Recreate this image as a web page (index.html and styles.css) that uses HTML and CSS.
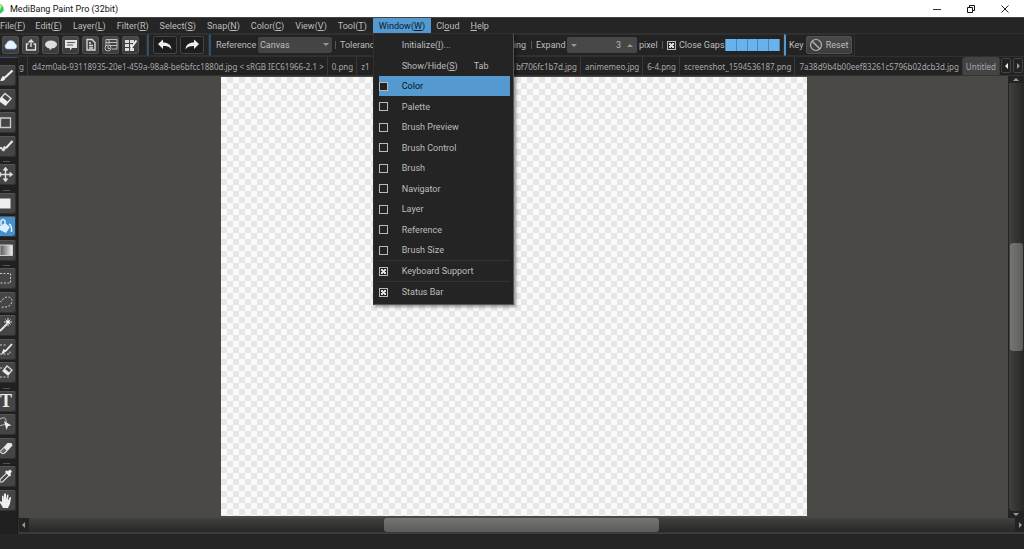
FILE: index.html
```html
<!DOCTYPE html>
<html lang="en">
<head>
<meta charset="utf-8">
<title>MediBang Paint Pro (32bit)</title>
<link rel="stylesheet" href="styles.css">
</head>
<body>
<div class="app">
  <header class="titlebar">
    <svg class="logo" width="5" height="12" viewBox="0 0 5 12"><path d="M0 1C3 2 4 5 3.5 8L0 11Z" fill="#35c76b"/><path d="M0 1l2 2-2 4z" fill="#c6ee70"/></svg>
    <h1 class="title">MediBang Paint Pro (32bit)</h1>
    <div class="window-buttons">
      <button aria-label="Minimize"><svg width="12" height="12" viewBox="0 0 12 12"><path d="M2 6.5h8" stroke="#333" fill="none"/></svg></button>
      <button aria-label="Restore"><svg width="12" height="12" viewBox="0 0 12 12"><path d="M2.5 4.5h5v5h-5zM4.5 4.500v-2h5v5h-2" stroke="#111" fill="none"/></svg></button>
      <button aria-label="Close"><svg width="12" height="12" viewBox="0 0 12 12"><path d="M2.500 2.500l7 7M9.500 2.500l-7 7" stroke="#222" fill="none"/></svg></button>
    </div>
  </header>

  <nav class="menubar" aria-label="Main menu">
    <button>File(<u>F</u>)</button>
    <button>Edit(<u>E</u>)</button>
    <button>Layer(<u>L</u>)</button>
    <button>Filter(<u>R</u>)</button>
    <button>Select(<u>S</u>)</button>
    <button>Snap(<u>N</u>)</button>
    <button>Color(<u>C</u>)</button>
    <button>View(<u>V</u>)</button>
    <button>Tool(<u>T</u>)</button>
    <div class="menu-holder">
      <button class="open" aria-expanded="true">Window(<u>W</u>)</button>
      <div class="dropdown">
        <button class="row">Initialize(<u>I</u>)...</button>
        <button class="row">Show/Hide(<u>S</u>)<span class="shortcut">Tab</span></button>
        <label class="row active"><input type="checkbox">Color</label>
        <label class="row"><input type="checkbox">Palette</label>
        <label class="row"><input type="checkbox">Brush Preview</label>
        <label class="row"><input type="checkbox">Brush Control</label>
        <label class="row"><input type="checkbox">Brush</label>
        <label class="row"><input type="checkbox">Navigator</label>
        <label class="row"><input type="checkbox">Layer</label>
        <label class="row"><input type="checkbox">Reference</label>
        <label class="row"><input type="checkbox">Brush Size</label>
        <label class="row ruled"><input type="checkbox" checked>Keyboard Support</label>
        <label class="row ruled"><input type="checkbox" checked>Status Bar</label>
      </div>
    </div>
    <button>Cl<u>o</u>ud</button>
    <button><u>H</u>elp</button>
  </nav>

  <div class="toolbar">
    <div class="group icons">
      <button class="icon-button" aria-label="Cloud"><svg width="16" height="18" viewBox="0 0 16 18"><path d="M4 13a3 3 0 0 1-.5-5.500 4.500 4.500 0 0 1 8.500 0A3 3 0 0 1 12 13z" fill="#e8f3ff" stroke="#78aee0" stroke-width=".6"/></svg></button>
      <button class="icon-button" aria-label="Export"><svg width="16" height="18" viewBox="0 0 16 18"><path d="M5.500 8H3.500v6h9V8h-2M8 11V4M5.500 6.500L8 4l2.500 2.500" fill="none" stroke="#ddd" stroke-width="1.400"/></svg></button>
      <button class="icon-button" aria-label="Balloon"><svg width="16" height="18" viewBox="0 0 16 18"><ellipse cx="8" cy="8.500" rx="6" ry="4" fill="#ddd"/><path d="M6 11l1 3.500 2-3z" fill="#ddd"/></svg></button>
      <button class="icon-button" aria-label="Comment"><svg width="16" height="18" viewBox="0 0 16 18"><path d="M2 4h12v8H9l-2 2.500V12H2z" fill="#e4e4e4"/><path d="M4 6.500h8M4 9h6" stroke="#555"/></svg></button>
      <button class="icon-button" aria-label="Document"><svg width="16" height="18" viewBox="0 0 16 18"><path d="M4 3.500h5l3 3V14H4zM6 7h2M6 9.500h4M6 12h4" fill="none" stroke="#ddd" stroke-width="1.300"/></svg></button>
      <button class="icon-button" aria-label="Frame settings"><svg width="16" height="18" viewBox="0 0 16 18"><path d="M3 10V3.500h11V13H9M3 6.500h11M6 3.500v5M6 9.500h8" fill="none" stroke="#bbb"/><circle cx="5" cy="12" r="3" fill="none" stroke="#bbb"/><path d="M5 10v2.500h2" fill="none" stroke="#bbb"/></svg></button>
      <button class="icon-button" aria-label="Edit grid"><svg width="16" height="18" viewBox="0 0 16 18"><path d="M2 4h4v3H2zM7 4h4v3H7zM2 8h4v3H2zM7 8h2v3H7zM2 12h4v3H2zM7 12h4v3H7z" fill="#ddd"/><path d="M8 12l5.500-7.500" stroke="#eee" stroke-width="2"/></svg></button>
    </div>
    <div class="group history">
      <button class="history-button" aria-label="Undo"><svg width="16" height="14" viewBox="0 0 16 14"><path d="M1 6l5-4.500V4.500c5 0 8 2 8.500 7C12.500 8.500 10 8 6 8v3z" fill="#eee"/></svg></button>
      <button class="history-button" aria-label="Redo"><svg width="16" height="14" viewBox="0 0 16 14"><path d="M15 6l-5-4.500V4.500c-5 0-8 2-8.500 7C3.500 8.500 6 8 10 8v3z" fill="#eee"/></svg></button>
    </div>
    <div class="group options">
      <label for="ref">Reference</label>
      <span class="select-wrap"><select id="ref"><option>Canvas</option></select></span>
      <i class="bar"></i>
      <label class="tolerance" for="tol">Tolerance</label>
      <input id="tol" class="tol-input" type="text" value="0">
      <label class="smooth">Anti-aliasing</label>
      <i class="bar"></i>
      <label class="expand" for="exp">Expand</label>
      <span class="spinner"><b class="tri down"></b><input id="exp" type="text" value="3"><b class="tri up"></b></span>
      <span class="unit">pixel</span>
      <i class="bar"></i>
      <label class="gaps"><input type="checkbox" checked>Close Gaps</label>
      <div class="meter"><i></i><i></i><i></i><i></i><i></i></div>
    </div>
    <div class="group keys">
      <span>Key</span>
      <button class="reset"><svg width="14" height="14" viewBox="0 0 14 14"><circle cx="7" cy="7" r="5.500" fill="none" stroke="#b8b8b8" stroke-width="1.200"/><path d="M3 3l8 8" stroke="#b8b8b8" stroke-width="1.200"/></svg>Reset</button>
    </div>
  </div>

  <div class="body">
    <aside class="tools">
      <button aria-label="Brush"><svg viewBox="0 0 16 21"><path d="M12.500 5.500L5 12.500" stroke="#eee" stroke-width="2.200"/><path d="M5.500 12.500c0 3-3 4-5.500 3 1.500-1 1.500-4 3.500-4.500z" fill="#eee"/></svg></button>
      <button aria-label="Eraser"><svg viewBox="0 0 16 21"><path d="M0 10l5-5.500 6 5-5.500 6.500L0 12" fill="none" stroke="#ddd" stroke-width="1.500"/><path d="M0 10l2-2 6 5-2.500 3L0 12z" fill="#eee"/></svg></button>
      <button aria-label="Shape"><svg viewBox="0 0 16 21"><path d="M0 6h10.500v9.500H0M.5 6v9.500" fill="none" stroke="#ccc" stroke-width="1.300"/></svg></button>
      <button aria-label="Dot pen"><svg viewBox="0 0 16 21"><path d="M12.500 5L6 12" stroke="#eee" stroke-width="2"/><path d="M7 11l-3 4.500L1 14l3-4zM0 11h2v2H0z" fill="#ddd"/></svg></button>
      <hr>
      <button aria-label="Move"><svg viewBox="0 0 16 21"><path d="M5.500 5v11M0 10.500h11M3.500 6.500l2-2.500 2 2.500M3.500 14.500l2 2.500 2-2.500M9.500 8.500l2.500 2-2.500 2M1 8.500l-1 1M1 12.500l-1-1" fill="none" stroke="#ddd" stroke-width="1.500"/></svg></button>
      <hr>
      <button aria-label="Fill rectangle"><svg viewBox="0 0 16 21"><path d="M0 5.500h10.500v10H0z" fill="#eee"/></svg></button>
      <button class="selected" aria-label="Bucket"><svg viewBox="0 0 16 21"><path d="M0 10l5-3 5 4-4 6-6-3z" fill="#d9eefe"/><path d="M1 9V5q2-3 4 0v4M9 8q3 1 2.500 8" fill="none" stroke="#e0f0ff" stroke-width="1.500"/></svg></button>
      <button aria-label="Gradient"><svg viewBox="0 0 16 21"><defs><linearGradient id="g"><stop offset="0" stop-color="#555"/><stop offset="1" stop-color="#f2f2f2"/></linearGradient></defs><path d="M0 5h12.500v10.500H0z" fill="url(#g)" stroke="#ccc"/></svg></button>
      <hr>
      <button aria-label="Select"><svg viewBox="0 0 16 21"><path d="M0 5.500h10.500v9.500H0" fill="none" stroke="#ccc" stroke-dasharray="2 1.500"/></svg></button>
      <button aria-label="Lasso"><svg viewBox="0 0 16 21"><path d="M0 9c1 2 2-1 4-3 4-2 8-1 8 3s-4 7-12 6" fill="none" stroke="#ccc" stroke-dasharray="2 1.500"/></svg></button>
      <button aria-label="Magic wand"><svg viewBox="0 0 16 21"><path d="M0 16l7-7" stroke="#ddd" stroke-width="2"/><path d="M8 3v8M4 7h8M5.500 4.500l5 5M10.500 4.500l-5 5" stroke="#ddd"/><circle cx="8" cy="7" r="1.500" fill="#fff"/></svg></button>
      <button aria-label="Select pen"><svg viewBox="0 0 16 21"><path d="M0 6h6M0 15h10v-4" fill="none" stroke="#ccc" stroke-dasharray="2 1.500"/><path d="M12 5l-6 6.500-3 2 1-3" stroke="#eee" stroke-width="1.800" fill="none"/></svg></button>
      <button aria-label="Select eraser"><svg viewBox="0 0 16 21"><path d="M0 6h4M0 15h10" stroke="#ccc" stroke-dasharray="2 1.500"/><path d="M3 9l4-5 5 4-4 5z" fill="none" stroke="#ddd" stroke-width="1.300"/><path d="M3 9l2-2 5 4-2 2z" fill="#eee"/></svg></button>
      <hr>
      <button class="type" aria-label="Text">T</button>
      <button aria-label="Operation"><svg viewBox="0 0 16 21"><path d="M0 5q5-3 6 1t-3 5-3 0" fill="none" stroke="#bbb"/><path d="M4 7l7.500 4.500-3.500.500-1.500 4z" fill="#eee"/></svg></button>
      <button aria-label="Divide"><svg viewBox="0 0 16 21"><path d="M0 13l7.500-8 4 0 1 2.500L5 15.500l-4 0z" fill="#e8e8e8"/><path d="M0 13.500l4-4 3 3-4 3.500z" fill="#666" stroke="#ddd"/></svg></button>
      <hr>
      <button aria-label="Eyedropper"><svg viewBox="0 0 16 21"><path d="M0 13.500l7-7 2.500 2.500-7 7H0z" fill="none" stroke="#ddd" stroke-width="1.200"/><path d="M6 4.500l2 .500 2-1.500 2 2-1.500 2 .500 2-1.500 1L5 6z" fill="#eee"/></svg></button>
      <button aria-label="Hand"><svg viewBox="0 0 16 21"><path d="M3 18c-1-2-2-4-3-5v-2l2 1V6q1-1 1.500 0l.500 4V4q1-1.500 2 0v6l1-5q1-1 1.500 0L8 10.500l2-3.500q1.500-.500 1 1-.500 6-3 10z" fill="#eee"/></svg></button>
    </aside>

    <main class="work">
      <div class="tabs">
        <span class="tab clipped">g</span>
        <span class="tab">d4zm0ab-93118935-20e1-459a-98a8-be6bfcc1880d.jpg &lt; sRGB IEC61966-2.1 &gt;</span>
        <span class="tab">0.png</span>
        <span class="tab long"><span>z1</span><span>931bf706fc1b7d.jpg</span></span>
        <span class="tab">animemeo.jpg</span>
        <span class="tab">6-4.png</span>
        <span class="tab">screenshot_1594536187.png</span>
        <span class="tab">7a38d9b4b00eef83261c5796b02dcb3d.jpg</span>
        <span class="tab current">Untitled</span>
        <button class="tab-arrow" aria-label="Previous tabs"><b class="tri left bright"></b></button>
        <button class="tab-arrow" aria-label="Next tabs"><b class="tri right"></b></button>
      </div>
      <div class="view">
        <div class="stage"><div class="paper"></div></div>
        <div class="vscroll"><b class="tri up"></b><div class="vtrack"><div class="thumb"></div></div><b class="tri down"></b></div>
      </div>
      <div class="hscroll"><b class="tri left"></b><div class="htrack"><div class="thumb"></div></div><b class="tri right"></b></div>
    </main>
  </div>
  <footer class="status"></footer>
</div>
</body>
</html>
```
FILE: styles.css
```css
* { box-sizing: border-box; }
body { margin: 0; background: #252525; color: #bdbdbd; font: 9px/12px Roboto, "Noto Sans", sans-serif; overflow: hidden; }
button, input, select { font: inherit; color: inherit; border: 0; padding: 0; margin: 0; background: none; }
svg { display: block; flex: none; }
.app { display: flex; flex-direction: column; height: 100vh; }

.titlebar { display: flex; align-items: center; height: 17px; background: #fff; color: #111; flex: none; }
.title { font-size: 9px; font-weight: 400; margin: 0 auto 0 5px; }
.window-buttons { display: flex; gap: 22px; padding-right: 13px; }

.menubar { display: flex; align-items: stretch; height: 17px; flex: none; border-top: 1px solid #444; border-bottom: 1px solid #303030; background: #252525; }
.menubar > button { padding: 0 6px 0 5px; white-space: nowrap; }
.menubar > button:first-child { padding: 0 5px 0 0; }
.menu-holder { position: relative; display: flex; }
.open { padding: 0 6px; background: #549ad0; color: #0b1c2b; }
.dropdown { position: absolute; z-index: 5; top: 100%; left: 0; width: 141px; padding: 1px 3px 2px 5px; background: #242424; border: 1px solid #303030; border-right-color: #555; border-bottom-color: #555; box-shadow: 2px 2px 3px rgba(0, 0, 0, .4); }
.row { display: flex; align-items: center; width: 100%; height: 20px; text-align: left; padding-left: 23px; white-space: nowrap; }
.row:nth-child(even) { height: 21px; }
label.row { padding-left: 0; }
.row input { margin: 0 14px 0 0; }
.row.active { background: #549ad0; color: #07131e; }
.row.ruled { height: 21px; border-top: 1px solid #333; }
.shortcut { margin-left: 16px; }
input[type="checkbox"] { appearance: none; flex: none; width: 9px; height: 9px; border: 1px solid #bbb; background: #242424; }
input[type="checkbox"]:checked { background: linear-gradient(45deg, transparent 38%, #ddd 38% 62%, transparent 62%) center / 5px 5px no-repeat, linear-gradient(-45deg, transparent 38%, #ddd 38% 62%, transparent 62%) center / 5px 5px no-repeat, #242424; }

.toolbar { display: flex; height: 23px; flex: none; background: #232323; border-bottom: 1px solid #303030; }
.group { display: flex; align-items: center; padding: 0 6px; border: 1px solid #303030; border-left: 0; }
.group + .group { border-left: 2px solid #32506a; }
.icons { gap: 3px; padding: 0 7px 0 2px; }
.icon-button, .reset { display: flex; align-items: center; justify-content: center; width: 17px; height: 18px; border: 1px solid #505050; border-radius: 2px; background: linear-gradient(#494949, #3b3b3b); }
.history { gap: 3px; padding: 0 4px 0 4px; }
.history-button { display: flex; align-items: center; justify-content: center; width: 24px; height: 18px; border: 1px solid #444; border-radius: 2px; background: #1d1d1d; }
.options { padding: 0 3px 0 5px; }
.options label, .unit { white-space: nowrap; flex: none; }
.options > label:first-child { width: 42px; }
.select-wrap { display: flex; position: relative; width: 74px; }
.select-wrap select { width: 100%; height: 16px; padding-left: 2px; appearance: none; background: #444; border-radius: 2px; }
.select-wrap::after { content: ""; position: absolute; right: 3px; top: 6px; border: 3px solid transparent; border-top-color: #999; border-bottom: 0; }
.bar { width: 1px; height: 8px; background: #5a5a5a; margin: 0 4px 0 3px; flex: none; }
.tol-input { width: 70px; height: 16px; margin: 0 8px; background: #444; }
.options .smooth { width: 63px; text-align: right; margin-right: 2px; }
.options .expand { width: 31px; }
.options .tolerance { width: 37px; }
.spinner { display: flex; align-items: center; width: 70px; height: 16px; padding: 0 4px; background: #474747; border-radius: 2px; }
.spinner input { flex: 1; min-width: 0; text-align: right; margin-right: 6px; }
.unit { width: 20px; margin-left: 2px; }
.gaps { display: flex; align-items: center; gap: 3px; width: 58px; }
.meter { display: flex; gap: 1px; width: 55px; height: 12px; padding: 0 1px; background: #4c87b5; }
.meter i { flex: 1; background: #68b2ee; }
.group.keys { border-left-color: #549ad0; padding: 0 2px 0 3px; gap: 2px; }
.reset { width: 46px; gap: 3px; }

.tri { width: 0; height: 0; flex: none; border: 3px solid transparent; }
.tri.up { border-bottom-color: #999; border-top: 0; }
.tri.down { border-top-color: #999; border-bottom: 0; }
.tri.left { border-right-color: #999; border-left: 0; }
.tri.right { border-left-color: #999; border-right: 0; }
.tri.left.bright { border-right-color: #eee; }

.body { display: flex; flex: 1; min-height: 0; }
.tools { display: flex; flex-direction: column; width: 18px; flex: none; padding-top: 7px; background: #202020; border-top: 1px solid #32506a; border-right: 1px solid #191919; }
.tools button { display: block; flex: none; width: 16px; height: 21px; margin-bottom: 2px; border-radius: 0 3px 3px 0; background: #454545; box-shadow: inset -1px -1px #303030, inset 0 1px #555; }
.tools button:nth-of-type(odd) { margin-bottom: 3px; }
.tools svg { width: 16px; height: 21px; }
.tools .selected { background: #4590c8; }
.tools .type { font: bold 18px/21px "Liberation Serif", serif; color: #eee; text-align: left; }
.tools hr { flex: none; width: 7px; height: 1px; margin: 2px 0 2px 3px; border: 0; background: #555; }

.work { display: flex; flex-direction: column; flex: 1; min-width: 0; border-left: 1px solid #303030; }
.tabs { display: flex; align-items: stretch; height: 19px; flex: none; background: #222; border-bottom: 1px solid #333; font: 8px/20px "Noto Sans", sans-serif; color: #a8a8a8; }
.tab { padding: 0 3px 0 4px; border-right: 1px solid #383838; white-space: nowrap; flex: none; }
.tab.clipped { padding: 0 3px 0 0; }
.tab.long { display: flex; justify-content: space-between; flex: 1; min-width: 0; overflow: hidden; }
.tab.current { padding: 0 3px; background: #444; border-radius: 3px 3px 0 0; }
.tab-arrow { display: flex; align-items: center; justify-content: center; width: 10px; margin: 1px 1px 2px 1px; border: 1px solid #444; border-radius: 2px; }
.view { display: flex; flex: 1; min-height: 0; background: #4a4945; }
.stage { display: grid; flex: 1; grid-template-columns: 202fr 586fr 201fr; padding: 1px 0 2px; }
.paper { grid-column: 2; background: repeating-conic-gradient(#e7e7e7 0 25%, #fafafa 0 50%) 0 0 / 12px 12px; }
.vscroll { display: flex; flex-direction: column; align-items: center; width: 16px; padding: 2px 0; background: #232323; }
.vtrack { display: grid; grid-template-rows: 160fr 107fr 160fr; flex: 1; width: 15px; padding: 0 1px; margin: 2px 0; background: linear-gradient(90deg, #41413e, #262626); border-radius: 0 0 4px 4px; }
.thumb { border-radius: 3px; }
.vtrack .thumb { grid-row: 2; background: linear-gradient(90deg, #767674, #5e5e5c); }
.hscroll { display: flex; align-items: center; gap: 4px; height: 16px; flex: none; padding: 0 2px 0 3px; background: #232323; border-bottom: 2px solid #3b3b3b; }
.htrack { display: grid; grid-template-columns: 356fr 275fr 357fr; flex: 1; height: 14px; background: linear-gradient(#41413e, #272727); }
.htrack .thumb { grid-column: 2; background: linear-gradient(#747472, #5c5c5a); }
.status { height: 15px; flex: none; background: #252525; }
```
